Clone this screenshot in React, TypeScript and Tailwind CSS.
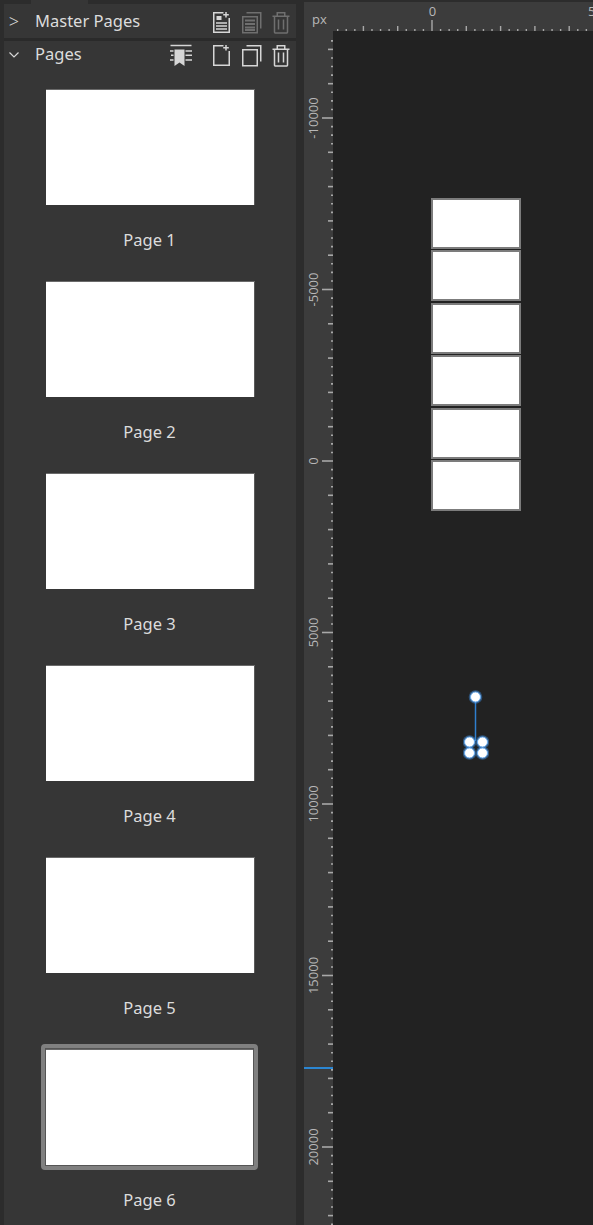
const pages = ["Page 1", "Page 2", "Page 3", "Page 4", "Page 5", "Page 6"];

const STEP = 8.575;

function DocBase({ dim, children }: { dim?: boolean; children?: React.ReactNode }) {
  return (
    <svg width="19" height="23" viewBox="0 0 19 23" fill="none" stroke={dim ? "#6f6f6f" : "#d6d6d6"} strokeWidth="1.5">
      <path d="M11.5 1.75H1.75V21.25H17.25V7" />
      <path d="M14 1V6.5M11.2 3.75H16.8" />
      {children}
    </svg>
  );
}

function CopyIcon({ dim, lines }: { dim?: boolean; lines?: boolean }) {
  const c = dim ? "#6f6f6f" : "#d6d6d6";
  return (
    <svg width="21" height="23" viewBox="0 0 21 23" fill="none" stroke={c} strokeWidth="1.5">
      <rect x="1.75" y="5.75" width="14.5" height="16" />
      <path d="M5.5 1.75H19.75V17.5" />
      {lines && <path d="M4 9.5H14M4 13H14M4 16.5H14M4 19H14" strokeWidth="2" />}
    </svg>
  );
}

function TrashIcon({ dim }: { dim?: boolean }) {
  return (
    <svg width="18" height="23" viewBox="0 0 18 23" fill="none" stroke={dim ? "#6f6f6f" : "#d6d6d6"} strokeWidth="1.5">
      <path d="M0.5 5.25H17.5M5.25 5V1.75H12.75V5" />
      <path d="M2.5 5.5V21.25C2.5 21.6 2.8 21.9 3.1 21.9H14.9C15.2 21.9 15.5 21.6 15.5 21.25V5.5" />
      <path d="M6.5 8.5V18.5M11.5 8.5V18.5" />
    </svg>
  );
}

function BookmarkIcon() {
  return (
    <svg width="22" height="24" viewBox="0 0 22 24" fill="none">
      <path d="M0.5 2.5H21.5" stroke="#d6d6d6" strokeWidth="1.5" />
      <path d="M4.5 6.5V23L9.5 19.5L14.5 23V6.5Z" fill="#d6d6d6" />
      <path d="M0 8H3.5M15.5 8H22M1 12.3H3.5M15.5 12.3H22M0 17H3.5M15.5 17H22" stroke="#d6d6d6" strokeWidth="1.5" />
    </svg>
  );
}

function TopRuler() {
  const ticks = [];
  for (let k = -11; k < 20; k++) {
    const x = 128 + k * STEP;
    const y1 = k % 20 === 0 ? 18 : k % 4 === 0 ? 24 : 27;
    ticks.push(<line key={k} x1={x} x2={x} y1={y1} y2={29} stroke="#a8a8a8" strokeWidth="1.4" />);
  }
  return (
    <svg width="289" height="29" className="block">
      {ticks}
      <text x="8" y="22" fontSize="13" fill="#b8b8b8" fontFamily="'Open Sans', sans-serif">px</text>
      <text x="128.5" y="14" textAnchor="middle" fontSize="13" fill="#b8b8b8" fontFamily="'Open Sans', sans-serif">0</text>
      <text x="284" y="14" fontSize="13" fill="#b8b8b8" fontFamily="'Open Sans', sans-serif">5</text>
    </svg>
  );
}

function SideRuler() {
  const ticks = [];
  for (let k = -49; k < 90; k++) {
    const y = 430 + k * STEP;
    const x1 = k % 20 === 0 ? 18 : k % 4 === 0 ? 24 : 27;
    ticks.push(<line key={k} x1={x1} x2={29} y1={y} y2={y} stroke="#a8a8a8" strokeWidth="1.6" />);
  }
  const labels = [-10000, -5000, 0, 5000, 10000, 15000, 20000];
  return (
    <svg width="29" height="1194" className="block">
      {ticks}
      {labels.map((n, i) => {
        const y = 87 + i * 171.5;
        return (
          <text
            key={n}
            x={0}
            y={0}
            transform={`translate(14 ${y}) rotate(-90)`}
            textAnchor="middle"
            fontSize="13"
            fill="#b8b8b8"
            fontFamily="'Open Sans', sans-serif"
          >
            {n}
          </text>
        );
      })}
      <rect x="0" y="1036" width="29" height="2" fill="#2b86d2" />
    </svg>
  );
}

function Handles() {
  const dots = [
    [12, 12],
    [6, 57],
    [19, 57],
    [6, 68],
    [19, 68],
  ];
  return (
    <svg width="26" height="76" className="absolute left-[130px] top-[654px]">
      <line x1="12.5" x2="12.5" y1="12" y2="56" stroke="#2f7fce" strokeWidth="1.5" />
      {dots.map(([x, y], i) => (
        <circle key={i} cx={x + 0.5} cy={y} r="6.8" fill="#3f93ea" opacity="0.45" />
      ))}
      {dots.map(([x, y], i) => (
        <circle key={i} cx={x + 0.5} cy={y} r="5" fill="#ffffff" stroke="#6fb0f2" strokeWidth="1" />
      ))}
    </svg>
  );
}

export default function App() {
  return (
    <div className="flex h-[1225px] w-[593px] overflow-hidden bg-[#2c2c2c] font-['Noto_Sans',sans-serif]">
      {/* left panel */}
      <aside className="ml-[4px] flex h-[1225px] w-[292px] shrink-0 flex-col overflow-hidden bg-[#363636]">
        <div className="h-[4px] shrink-0 bg-[#2c2c2c] pl-[27px]">
          <div className="h-full w-[57px] bg-[#363636]" />
        </div>
        <div className="flex h-[37px] shrink-0 items-center border-b-[3px] border-[#2a2a2a]">
          <span className="flex w-[31px] justify-center pr-[11px] text-[18px] font-light text-[#d8d8d8]">&gt;</span>
          <span className="text-[16.5px] text-[#dcdcdc]">Master Pages</span>
          <div className="ml-auto flex items-center gap-[10px] pt-[2px] pr-[6px]">
            <DocBase>
              <path d="M4.5 5H9.5V9H4.5Z" fill="#d6d6d6" stroke="none" />
              <path d="M4 12H15M4 15H15M4 18H15" strokeWidth="1.5" />
            </DocBase>
            <CopyIcon dim lines />
            <TrashIcon dim />
          </div>
        </div>
        <div className="flex h-[28px] shrink-0 items-center">
          <span className="flex w-[31px] justify-center pr-[12px]">
            <svg width="10" height="6" viewBox="0 0 10 6" fill="none" stroke="#d8d8d8" strokeWidth="1.2">
              <path d="M0.5 0.5L5 5L9.5 0.5" />
            </svg>
          </span>
          <span className="pb-[2px] text-[16.5px] text-[#dcdcdc]">Pages</span>
          <div className="ml-auto flex items-center pr-[6px]">
            <BookmarkIcon />
            <div className="ml-[20px] flex items-center gap-[10px]">
              <DocBase />
              <CopyIcon />
              <TrashIcon />
            </div>
          </div>
        </div>

        <div className="flex shrink-0 flex-col pt-[21px]">
          {pages.map((page, i) => (
            <div key={page} className="ml-[42px] flex h-[192px] w-[209px] shrink-0 flex-col items-center">
              <div className="relative h-[115px] w-[209px] shrink-0 border-r border-[#5a5a5a] bg-white shadow-[0_-1px_0_#6a6a6a]">
                {i === pages.length - 1 && (
                  <div className="absolute top-[-6px] right-[-4px] bottom-[-5px] left-[-5px] rounded-[4px] border-[4px] border-[#808080] shadow-[inset_0_0_0_1px_#555555]" />
                )}
              </div>
              <span className="mt-[23px] pr-[2px] text-[16.5px] leading-[24px] text-[#dcdcdc]">{page}</span>
            </div>
          ))}
        </div>
      </aside>

      {/* ruler + canvas */}
      <main className="ml-[8px] flex min-w-0 flex-1 flex-col">
        <div className="mt-[2px] h-[29px] bg-[#3c3c3c]">
          <TopRuler />
        </div>
        <div className="flex flex-1">
          <div className="w-[29px] shrink-0 bg-[#3c3c3c]">
            <SideRuler />
          </div>
          <div className="relative flex-1 bg-[#222222]">
            <div className="absolute left-[98px] top-[167px] flex w-[90px] flex-col gap-[1.4px]">
              {pages.map((page) => (
                <div key={page} className="h-[51px] border-2 border-[#7c7c7c] bg-white" />
              ))}
            </div>
            <Handles />
          </div>
        </div>
      </main>
    </div>
  );
}
